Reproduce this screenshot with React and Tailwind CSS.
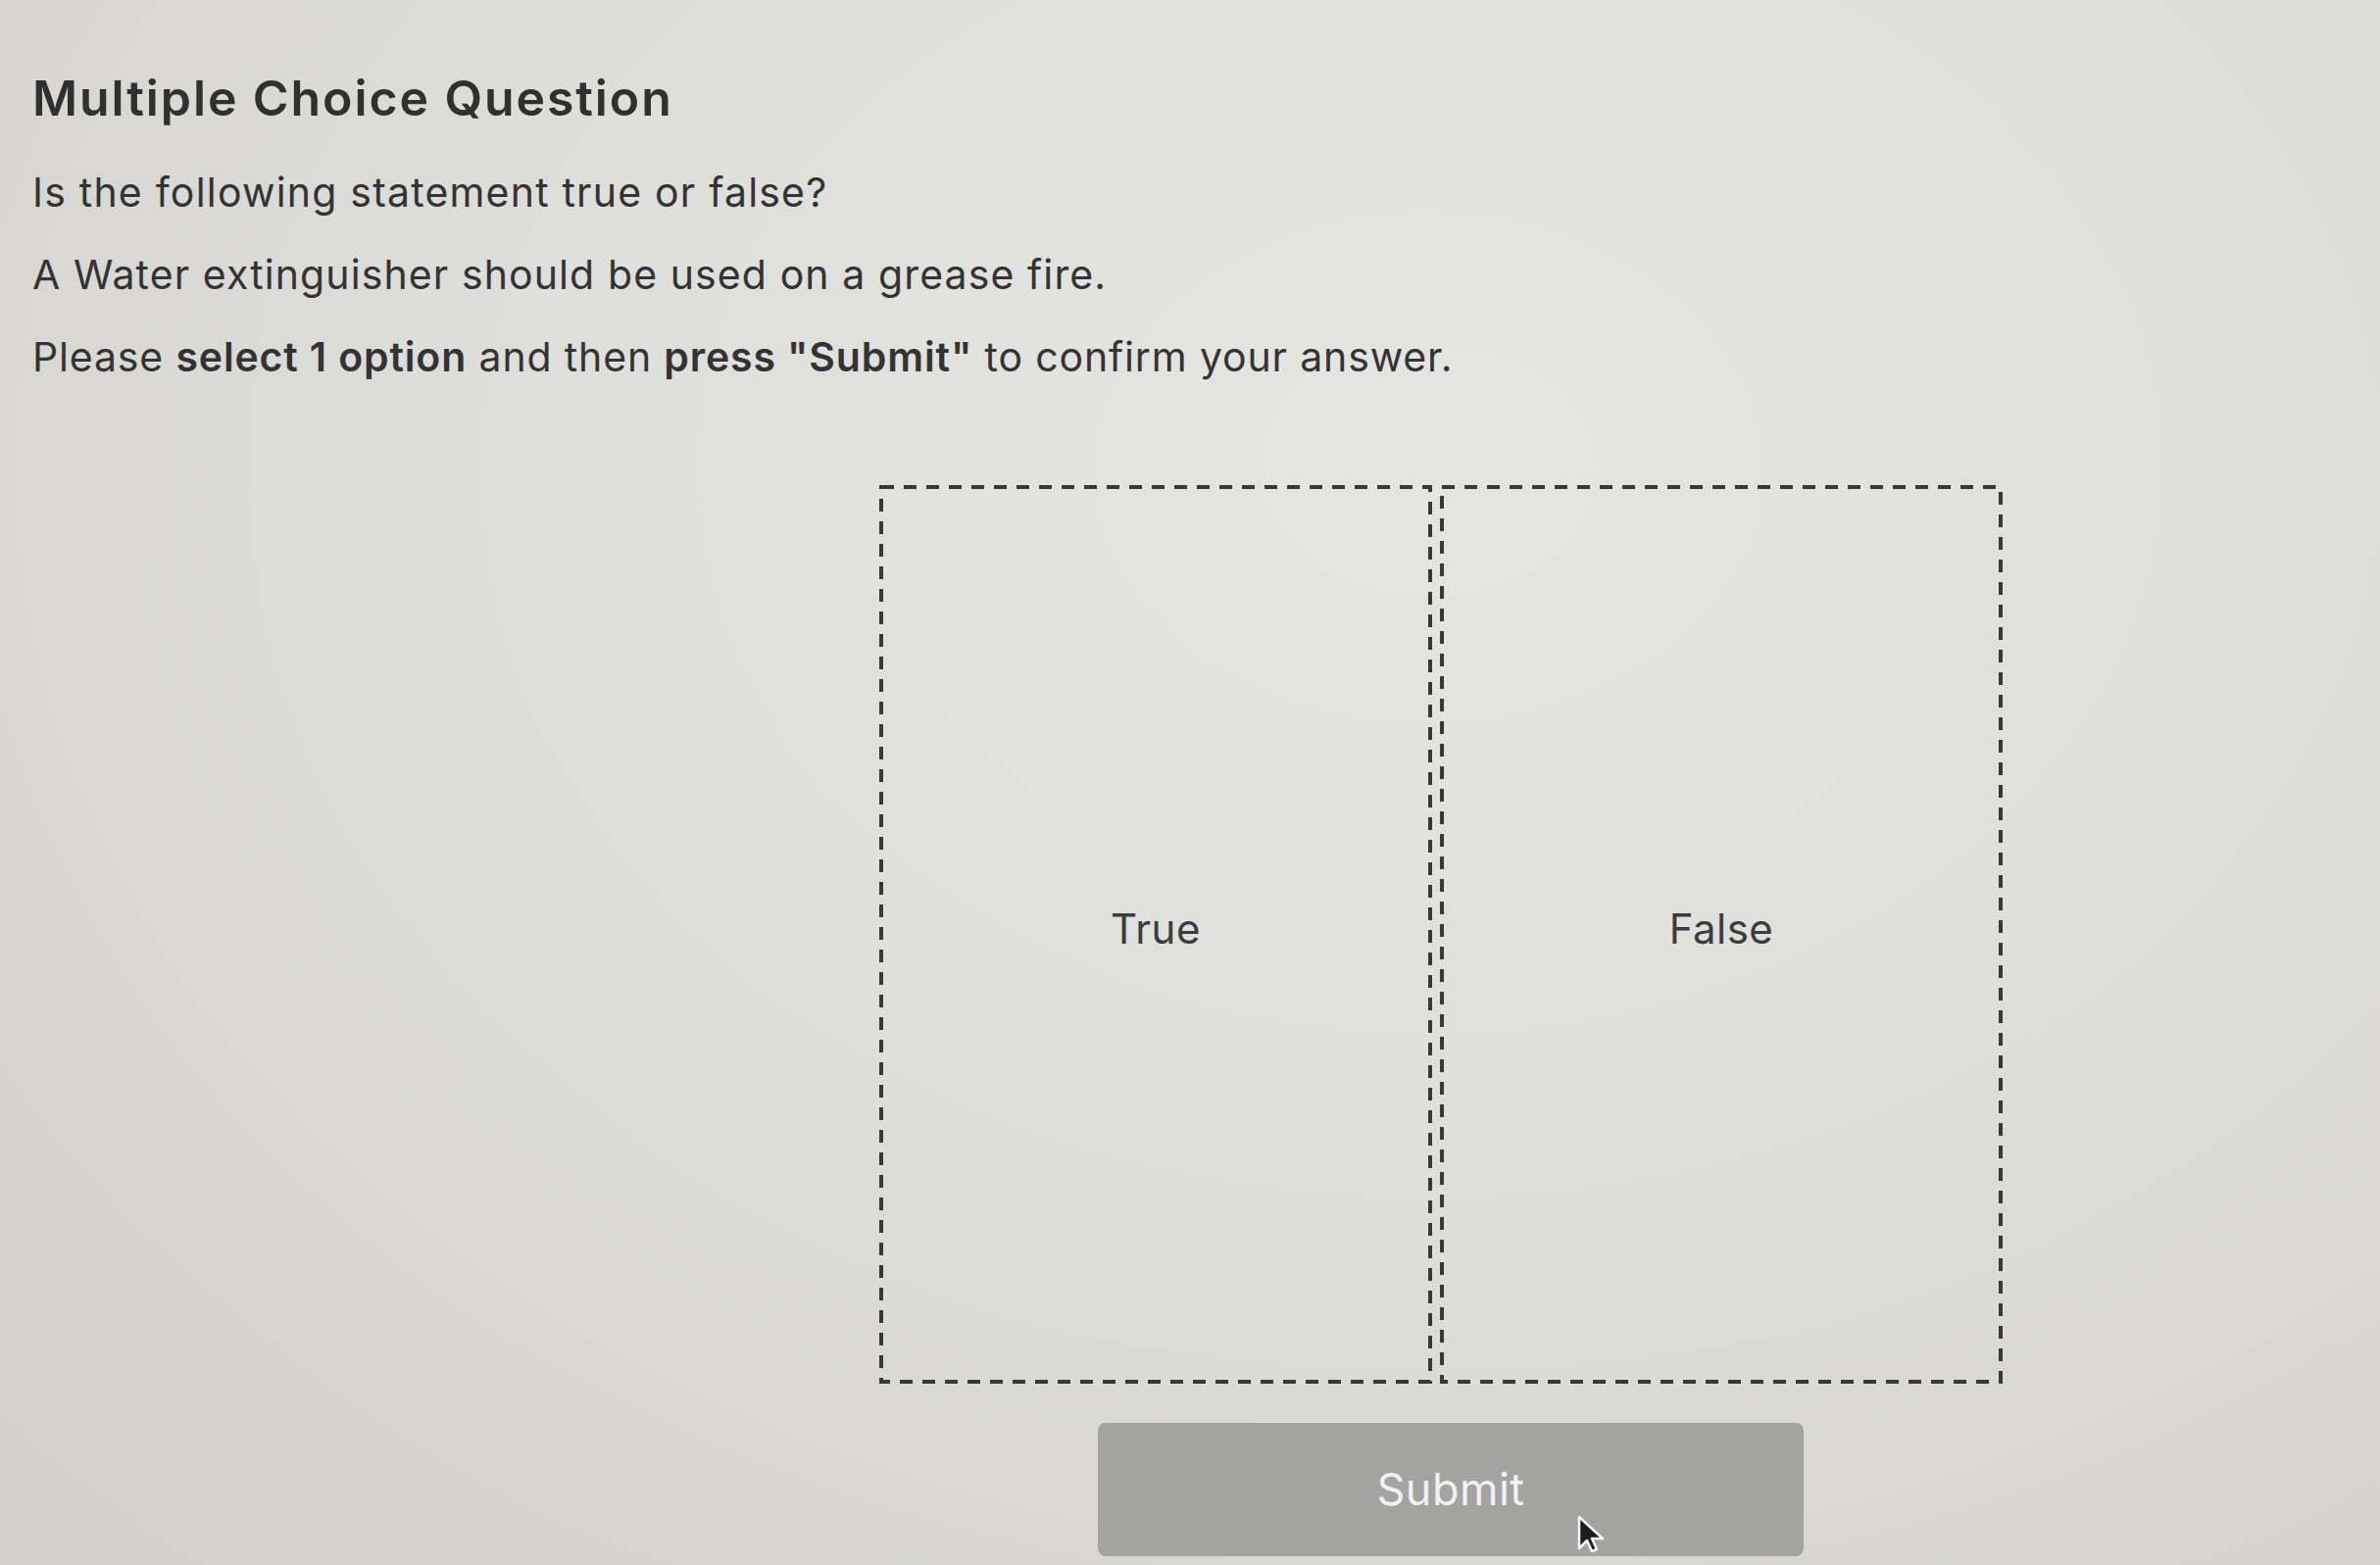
function Choice({ label, w }) {
  return (
    <div className={`relative flex h-[917px] items-center justify-center pb-[12px] text-[42px] tracking-[0.5px] text-[#3c3c3c] ${w}`}>
      <svg className="pointer-events-none absolute inset-0 h-full w-full" preserveAspectRatio="none">
        <rect x="2" y="2" width="calc(100% - 4px)" height="calc(100% - 4px)" fill="none" stroke="#383838" strokeWidth="4" strokeDasharray="13 10" />
      </svg>
      <span>{label}</span>
    </div>
  );
}

export default function App() {
  return (
    <div className="relative h-[1597px] w-full overflow-hidden bg-[radial-gradient(ellipse_at_60%_30%,#e5e5e1_0%,#dededa_45%,#d1d0cb_100%)] font-['Inter','Noto_Sans',sans-serif] text-[#333333]">
      <div className="px-[33px] pt-[70px]">
        <h1 className="text-[50px] font-semibold leading-[60px] tracking-[1.9px] text-[#303030]">Multiple Choice Question</h1>
        <p className="mt-[42px] text-[41px] leading-[48px] tracking-[1.2px]">Is the following statement true or false?</p>
        <p className="mt-[36px] text-[41px] leading-[48px] tracking-[1.1px]">A Water extinguisher should be used on a grease fire.</p>
        <p className="mt-[36px] text-[41px] leading-[48px] tracking-[0.85px]">
          Please <span className="font-semibold">select 1 option</span> and then <span className="font-semibold">press "Submit"</span> to confirm your answer.
        </p>
      </div>
      <div className="flex flex-col items-center pl-[512px] pt-[107px]">
        <div className="flex gap-[8px]">
          <Choice label="True" w="w-[564px]" />
          <Choice label="False" w="w-[574px]" />
        </div>
        <button className="mt-[40px] ml-[20px] h-[136px] w-[720px] rounded-[8px] bg-[#a3a3a1] text-[45px] tracking-[0.5px] text-[#f1f1f1]">Submit</button>
      </div>
      <svg className="absolute left-[1608px] top-[1546px]" width="30" height="40" viewBox="0 0 30 40">
        <path d="M3 2 L3 34 L11 26 L16 37 L21 35 L16 24 L27 24 Z" fill="#1e1e1e" stroke="#f4f4f4" strokeWidth="2.5" strokeLinejoin="round" />
      </svg>
    </div>
  );
}
